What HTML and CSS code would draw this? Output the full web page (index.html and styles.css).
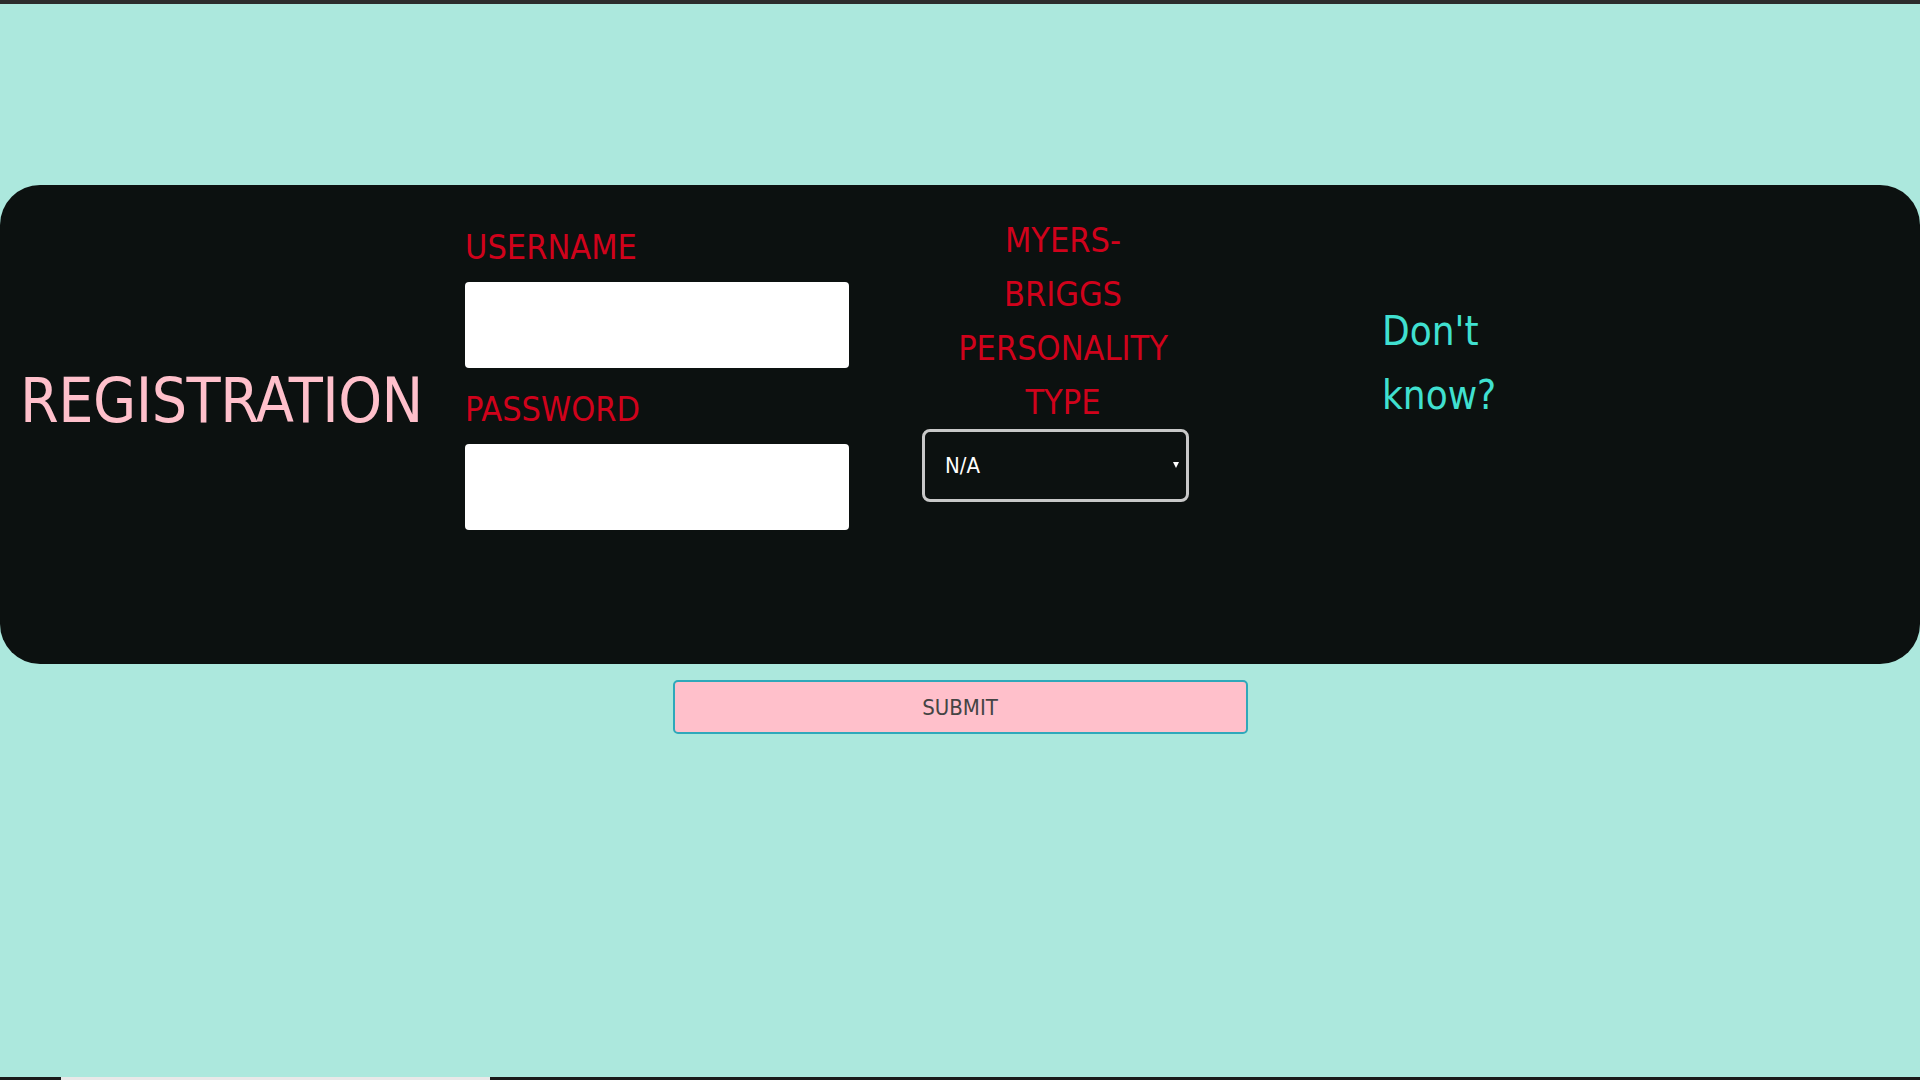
FILE: index.html
```html
<!DOCTYPE html>
<html lang="en">
<head>
<meta charset="utf-8">
<title>Registration</title>
<link rel="stylesheet" href="styles.css">
</head>
<body>
<div class="topbar"></div>
<main class="page">
  <form class="card">
    <h1 class="title">REGISTRATION</h1>
    <div class="fields">
      <label class="label" for="user">USERNAME</label>
      <input class="field" id="user" type="text">
      <label class="label" for="pass">PASSWORD</label>
      <input class="field" id="pass" type="password">
    </div>
    <div class="mbti">
      <label class="label mbti-label" for="type">MYERS-<br>BRIGGS<br>PERSONALITY<br>TYPE</label>
      <div class="select-wrap">
        <select class="select" id="type">
          <option>N/A</option>
        </select>
      </div>
    </div>
    <p class="help">Don't<br>know?</p>
  </form>
  <div class="actions">
    <button class="submit" type="button">SUBMIT</button>
  </div>
</main>
<div class="bottombar"><span class="bottom-seg"></span></div>
</body>
</html>
```

FILE: styles.css
```css
* { box-sizing: border-box; }

html, body {
  margin: 0;
  height: 100%;
}

body {
  background: #ace8dd;
  font-family: "Liberation Sans Narrow", "DejaVu Sans Condensed", "Liberation Sans", sans-serif;
  font-stretch: condensed;
  display: flex;
  flex-direction: column;
  overflow: hidden;
}

.topbar {
  height: 4px;
  background: #2c2c2c;
  flex: none;
}

.page {
  flex: 1;
  padding-top: 181px;
}

.card {
  height: 479px;
  background: #0c1110;
  border-radius: 40px;
  display: flex;
  align-items: flex-start;
  padding-left: 20px;
  margin: 0;
}

.title {
  width: 445px;
  margin: 179px 0 0;
  color: #ffc0cb;
  font-size: 62px;
  font-weight: 400;
  line-height: 1.2;
  letter-spacing: -0.5px;
}

.fields {
  width: 384px;
  margin-top: 35px;
  display: flex;
  flex-direction: column;
}

.label {
  color: #d0021b;
  font-size: 34px;
  line-height: 54px;
  display: block;
}

.fields .label { margin-bottom: 8px; }

.field {
  width: 384px;
  height: 86px;
  border: none;
  border-radius: 4px;
  background: #ffffff;
  margin-bottom: 14px;
  padding: 0 12px;
  font-size: 24px;
}

.mbti {
  margin-left: 73px;
  margin-top: 28px;
  width: 282px;
  display: flex;
  flex-direction: column;
}

.mbti-label {
  text-align: center;
}

.select-wrap {
  position: relative;
  width: 267px;
}

.select-wrap::after {
  content: "";
  position: absolute;
  right: 10px;
  top: 33px;
  border-left: 3.5px solid transparent;
  border-right: 3.5px solid transparent;
  border-top: 6px solid #ffffff;
}

.select {
  appearance: none;
  -webkit-appearance: none;
  width: 267px;
  height: 73px;
  background: #0c1110;
  color: #ffffff;
  border: 3px solid #c8c8c8;
  border-radius: 8px;
  padding: 0 20px;
  font-family: inherit;
  font-stretch: condensed;
  font-size: 22px;
  display: block;
}

.help {
  margin: 114px 0 0 178px;
  color: #40e0d0;
  font-size: 40px;
  line-height: 64px;
}

.actions {
  display: flex;
  justify-content: center;
  margin-top: 16px;
}

.submit {
  width: 575px;
  height: 54px;
  background: #ffc0cb;
  border: 2px solid #2fa8ba;
  border-radius: 5px;
  color: #444444;
  font-family: inherit;
  font-stretch: condensed;
  font-size: 22px;
}

.bottombar {
  height: 3px;
  background: #1a1a1a;
  flex: none;
  display: flex;
}

.bottom-seg {
  margin-left: 61px;
  width: 429px;
  background: #e8e8e8;
}
```
